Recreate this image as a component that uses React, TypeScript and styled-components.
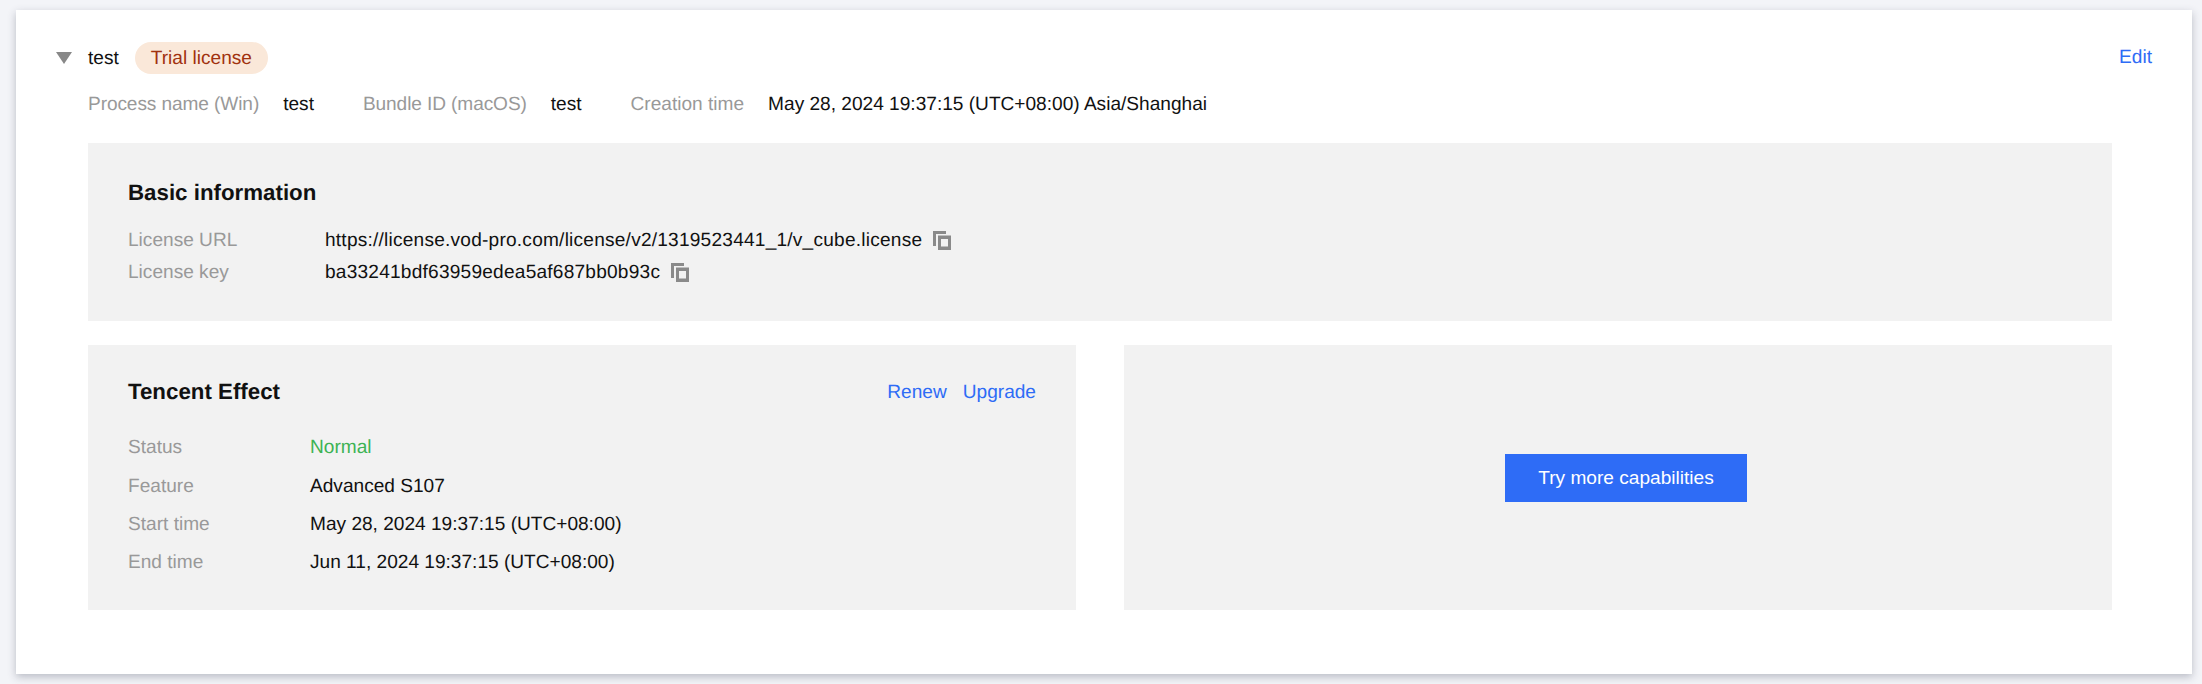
import React from "react";
import styled, { createGlobalStyle } from "styled-components";

const Global = createGlobalStyle`
  html, body { margin: 0; padding: 0; background: #f3f4f8; }
  body { font-family: "Liberation Sans", Arial, sans-serif; font-size: 19.1px; color: #111; text-rendering: geometricPrecision; }
`;
const Page = styled.div`
  padding: 10px 10px 10px 16px;
  height: 684px;
  box-sizing: border-box;
`;
const Card = styled.section`
  background: #fff;
  height: 664px;
  box-sizing: border-box;
  padding: 32px 40px 0 40px;
  box-shadow: 0 3px 8px rgba(54, 58, 80, 0.3);
`;
const Header = styled.div`
  display: flex;
  align-items: center;
  height: 32px;
`;
const Caret = styled.svg`
  width: 16px;
  height: 12px;
  margin-right: 16px;
  fill: #888;
  flex: none;
`;
const Name = styled.span`
  line-height: 28px;
  padding-top: 2px;
`;
const Badge = styled.span`
  margin-left: 16px;
  padding: 0 16px;
  height: 32px;
  line-height: 33px;
  border-radius: 16px;
  background: #fae8d9;
  color: #a1320f;
`;
const Link = styled.a<{ $gap?: number }>`
  color: #2e6cf6;
  margin-left: ${(p) => p.$gap ?? 0}px;
  cursor: pointer;
`;
const EditLink = styled(Link)`
  margin-left: auto;
`;
const Body = styled.div`
  padding: 0 40px 0 32px;
`;
const Meta = styled.div`
  display: flex;
  align-items: center;
  height: 28px;
  margin-top: 17px;
`;
const MetaLabel = styled.span<{ $tight?: boolean }>`
  color: #999;
  margin-right: 24px;
  letter-spacing: ${(p) => (p.$tight ? "-0.1px" : "0")};
`;
const MetaValue = styled.span`
  color: #111;
  margin-right: 49px;
`;
const Block = styled.div`
  background: #f2f2f2;
`;
const BasicBlock = styled(Block)`
  height: 178px;
  margin-top: 24px;
  padding: 35px 40px 0;
  box-sizing: border-box;
`;
const Title = styled.h3`
  margin: 0;
  font-size: 22.3px;
  font-weight: 700;
  line-height: 30px;
  color: #111;
`;
const UrlGrid = styled.div`
  display: grid;
  grid-template-columns: 197px 1fr;
  grid-auto-rows: 32px;
  margin-top: 17px;
  align-items: center;
`;
const Label = styled.span`
  color: #999;
`;
const Value = styled.span<{ $green?: boolean }>`
  color: ${(p) => (p.$green ? "#3db354" : "#111")};
  display: flex;
  align-items: center;
`;
const CodeValue = styled(Value)`
  letter-spacing: 0.22px;
`;
const CopyIcon = styled.svg`
  width: 18px;
  height: 19px;
  margin-left: 11px;
  margin-bottom: 2px;
  fill: #8a8a8a;
`;
const Columns = styled.div`
  display: grid;
  grid-template-columns: 1fr 1fr;
  gap: 48px;
  margin-top: 24px;
`;
const EffectBlock = styled(Block)`
  height: 265px;
  padding: 32px 40px 0;
  box-sizing: border-box;
`;
const EffectHead = styled.div`
  display: flex;
  align-items: center;
  justify-content: space-between;
  height: 30px;
`;
const Links = styled.div`
  display: flex;
  padding-top: 1px;
`;
const InfoGrid = styled.div`
  display: grid;
  grid-template-columns: 182px 1fr;
  grid-auto-rows: 38.4px;
  margin-top: 22px;
  align-items: center;
`;
const PromoBlock = styled(Block)`
  height: 265px;
  display: flex;
  align-items: center;
  justify-content: center;
`;
const Button = styled.button`
  width: 242px;
  height: 48px;
  margin-left: 16px;
  padding: 0;
  border: 0;
  background: #2e6cf6;
  color: #fff;
  font: inherit;
  cursor: pointer;
`;

const Copy = () => (
  <CopyIcon viewBox="0 0 18 19" aria-hidden="true">
    <path d="M0 0h13v3H3v12H0z" />
    <path fillRule="evenodd" d="M5 4.500h13V19H5zM8 8v7.500h7V8z" />
  </CopyIcon>
);

export default function App() {
  return (
    <Page>
      <Global />
      <Card>
        <Header>
          <Caret viewBox="0 0 16 12" aria-hidden="true">
            <path d="M0 0h16L8 12z" />
          </Caret>
          <Name>test</Name>
          <Badge>Trial license</Badge>
          <EditLink>Edit</EditLink>
        </Header>
        <Body>
          <Meta>
            <MetaLabel $tight>Process name (Win)</MetaLabel>
            <MetaValue>test</MetaValue>
            <MetaLabel $tight>Bundle ID (macOS)</MetaLabel>
            <MetaValue>test</MetaValue>
            <MetaLabel>Creation time</MetaLabel>
            <MetaValue>May 28, 2024 19:37:15 (UTC+08:00) Asia/Shanghai</MetaValue>
          </Meta>
          <BasicBlock>
            <Title>Basic information</Title>
            <UrlGrid>
              <Label>License URL</Label>
              <CodeValue>
                https://license.vod-pro.com/license/v2/1319523441_1/v_cube.license
                <Copy />
              </CodeValue>
              <Label>License key</Label>
              <CodeValue>
                ba33241bdf63959edea5af687bb0b93c
                <Copy />
              </CodeValue>
            </UrlGrid>
          </BasicBlock>
          <Columns>
            <EffectBlock>
              <EffectHead>
                <Title>Tencent Effect</Title>
                <Links>
                  <Link>Renew</Link>
                  <Link $gap={16}>Upgrade</Link>
                </Links>
              </EffectHead>
              <InfoGrid>
                <Label>Status</Label>
                <Value $green>Normal</Value>
                <Label>Feature</Label>
                <Value>Advanced S107</Value>
                <Label>Start time</Label>
                <Value>May 28, 2024 19:37:15 (UTC+08:00)</Value>
                <Label>End time</Label>
                <Value>Jun 11, 2024 19:37:15 (UTC+08:00)</Value>
              </InfoGrid>
            </EffectBlock>
            <PromoBlock>
              <Button>Try more capabilities</Button>
            </PromoBlock>
          </Columns>
        </Body>
      </Card>
    </Page>
  );
}
